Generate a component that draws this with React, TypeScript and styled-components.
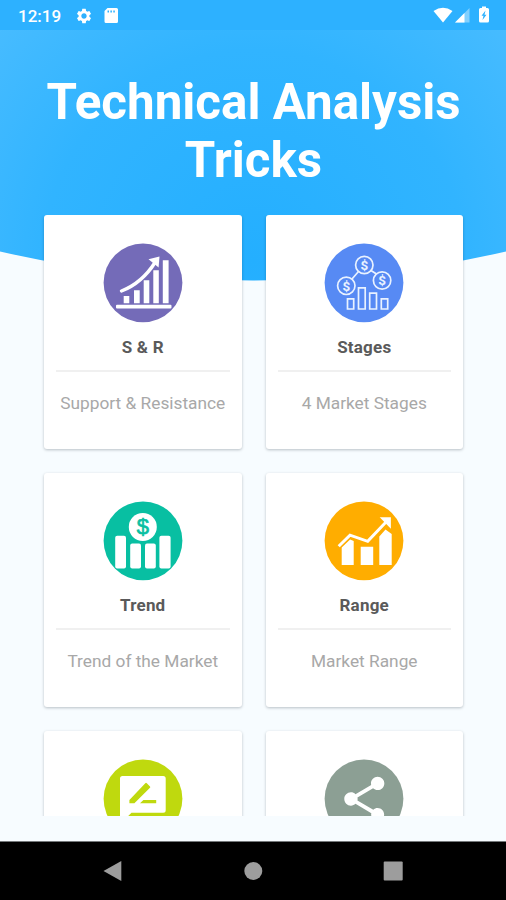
import React from "react";
import styled, { createGlobalStyle } from "styled-components";
import { MdShare, MdSettings } from "react-icons/md";

const GlobalStyle = createGlobalStyle`
  * { box-sizing: border-box; }
  body { margin: 0; font-family: Roboto, sans-serif; }
`;

const Screen = styled.div`
  position: relative;
  display: flex;
  flex-direction: column;
  width: 506px;
  height: 900px;
  overflow: hidden;
  background: #f7fcff;
`;

const Backdrop = styled.svg`
  position: absolute;
  top: 0;
  left: 0;
`;

const StatusBar = styled.header`
  position: relative;
  display: flex;
  align-items: center;
  height: 30px;
  padding: 2px 15px 0 18px;
  background: #2db1ff;
  color: #fff;
`;

const Clock = styled.span`
  width: 57px;
  font-size: 17px;
  font-weight: 500;
`;

const StatusIcons = styled.div<{ $push?: boolean }>`
  display: flex;
  align-items: center;
  margin-left: ${(p) => (p.$push ? "auto" : "0")};
`;

const Title = styled.h1`
  position: relative;
  height: 185px;
  margin: 0;
  padding: 43px 0 0 1px;
  color: #fff;
  font-size: 49.3px;
  font-weight: 700;
  line-height: 58px;
  text-align: center;
`;

const CardGrid = styled.main`
  position: relative;
  display: grid;
  grid-template-columns: 197.5px 197.5px;
  grid-auto-rows: 234px;
  gap: 24px;
  height: 601px;
  padding: 0 43px 0 44px;
  overflow: hidden;
`;

const Card = styled.section`
  display: flex;
  flex-direction: column;
  align-items: center;
  padding: 28px 12px 0;
  border-radius: 3px;
  background: #fff;
  box-shadow: 0 1px 3px rgba(0, 20, 30, 0.26);
`;

const IconCanvas = styled.svg`
  display: block;
  flex: none;
  width: 80px;
  height: 80px;
`;

const CardTitle = styled.h2`
  width: 100%;
  height: 49px;
  margin: 0;
  padding-top: 14px;
  border-bottom: 2px solid #f0f0f0;
  color: #5a5a5a;
  font-size: 17px;
  font-weight: 700;
  line-height: 20px;
  letter-spacing: 0.2px;
  text-align: center;
`;

const CardText = styled.p`
  margin: 20px -10px 0;
  color: #a8a8a8;
  font-size: 17.3px;
  line-height: 22px;
  white-space: nowrap;
`;

const NavBar = styled.nav`
  position: relative;
  display: grid;
  grid-template-columns: repeat(3, 140px);
  place-content: center;
  place-items: center;
  height: 59px;
  margin-top: auto;
  padding-bottom: 1px;
  border-top: 1px solid #75797b;
  background: #000;
`;

function GrowthIcon() {
  return (
    <g fill="#fff">
      <path d="M20.7 53H26.3V60.3H20.7ZM31 47.3H36.7V60.3H31ZM40.7 37.3H46.3V60.3H40.7ZM50.3 27.3H55.8V60.3H50.3ZM59.8 17.3H65.6V60.3H59.8Z" />
      <rect x="13" y="61.8" width="55.5" height="3.7" rx="1" />
      <path d="M18.5 48Q39 40 52 19.5" fill="none" stroke="#fff" strokeWidth="3.4" strokeLinecap="round" />
      <path d="M45.5 16.2L56.5 13.5L55.6 24.5Z" />
    </g>
  );
}

const coins = [[39.8, 22], [21.8, 42.8], [57.6, 37.5]];

function StagesIcon() {
  return (
    <g transform="translate(0.5 0)" fill="none" stroke="#e9f2ff" strokeWidth="1.7">
      <path d="M34 28.5L27.5 36M46.5 27.5L52 31" />
      {coins.map(([x, y]) => (
        <g key={x}>
          <circle cx={x} cy={y} r="8.7" />
          <text x={x} y={y + 4.7} fill="#e9f2ff" stroke="none" fontSize="13.5" fontWeight="700" textAnchor="middle">$</text>
        </g>
      ))}
      <path d="M23 55.8H29.2V66H23ZM34 44.8H40.7V66H34ZM45.2 50.2H52V66H45.2ZM56.8 55.8H63.2V66H56.8Z" />
    </g>
  );
}

function TrendIcon() {
  return (
    <g fill="#fff">
      <rect x="12.2" y="34.7" width="10.8" height="32.8" rx="2" />
      <rect x="27.2" y="42.5" width="10.8" height="25" rx="2" />
      <rect x="42" y="42.5" width="10.8" height="25" rx="2" />
      <rect x="56.4" y="34.7" width="11.2" height="32.8" rx="2" />
      <circle cx="39.8" cy="26" r="14" />
      <text x="39.8" y="33.4" fill="#08bfa2" stroke="#08bfa2" strokeWidth="0.7" fontFamily="Liberation Sans, sans-serif" fontSize="22" textAnchor="middle">$</text>
    </g>
  );
}

function RangeIcon() {
  return (
    <g transform="translate(0.5 0)" fill="#fff">
      <path d="M17.2 46.5L25.6 38.5L29.2 40V64H17.2ZM36.2 45.7H48.7V64H36.2ZM54.8 35.5L61 28.5L67.2 33V64H54.8Z" />
      <path d="M14.2 45.2L25.5 34.2L43.2 40.3L62 20.5" fill="none" stroke="#fff" strokeWidth="3" />
      <path d="M55.2 16.3H66.4V27.8Z" />
    </g>
  );
}

function ReviewIcon() {
  return (
    <g>
      <path d="M19.5 17H60.2Q62.7 17 62.7 19.5V51.2Q62.7 53.7 60.2 53.7H28.5L17 65.2V19.5Q17 17 19.5 17Z" fill="#fff" />
      <path d="M26.4 44.3V41L42.3 24.2Q43 23.5 43.8 24.2L47 27.4Q47.6 28.1 47 28.8L31.4 44.3ZM37 44.3L40.4 41H53.2V44.3Z" fill="#bfd90e" />
    </g>
  );
}

const cards = [
  { title: "S & R", text: "Support & Resistance", color: "#746bb8", icon: <GrowthIcon /> },
  { title: "Stages", text: "4 Market Stages", color: "#578af4", icon: <StagesIcon /> },
  { title: "Trend", text: "Trend of the Market", color: "#08bfa2", icon: <TrendIcon /> },
  { title: "Range", text: "Market Range", color: "#ffad00", icon: <RangeIcon /> },
  { title: "", text: "", color: "#bfd90e", icon: <ReviewIcon /> },
  { title: "", text: "", color: "#8c9f94", icon: <MdShare x={13.6} y={13.3} size={53.4} color="#fff" /> },
];

export default function App() {
  return (
    <>
      <GlobalStyle />
      <Screen>
        <Backdrop width="506" height="290" viewBox="0 0 506 290">
          <defs>
            <radialGradient id="sky" gradientUnits="userSpaceOnUse" cx="253" cy="260" r="350">
              <stop offset="0" stopColor="#24afff" />
              <stop offset="0.6" stopColor="#31b4ff" />
              <stop offset="1" stopColor="#48bcff" />
            </radialGradient>
          </defs>
          <path d="M0 0H506V251.5Q253 309.5 0 251.5Z" fill="url(#sky)" />
        </Backdrop>
        <StatusBar>
          <Clock>12:19</Clock>
          <StatusIcons>
            <MdSettings size={18} />
            <svg width="30" height="18" viewBox="0 0 30 18" fill="#fff">
              <path fillRule="evenodd" d="M14.5 1H23.5Q25 1 25 2.5V14.5Q25 16 23.5 16H13Q11.5 16 11.5 14.5V4ZM14.5 3.5V5.5H16V3.5ZM17.4 3.5V5.5H18.9V3.5ZM20.3 3.5V5.5H21.8V3.5Z" />
            </svg>
          </StatusIcons>
          <StatusIcons $push>
            <svg width="58" height="20" viewBox="0 0 58 20" fill="#fff">
              <path d="M0.5 5Q10 -1.5 19.5 5L10 16.5Z" />
              <path d="M36.5 2V16.5H22Z" opacity="0.4" />
              <path d="M31.5 7V16.5H22Z" />
              <path fillRule="evenodd" d="M48 2H49V0.5H53V2H54.5Q56 2 56 3.5V15Q56 16.5 54.5 16.5H47.5Q46 16.5 46 15V3.5Q46 2 47.5 2ZM52.5 4.5L48.5 9.8H50.5L49.5 14L53.5 8.8H51.5Z" />
            </svg>
          </StatusIcons>
        </StatusBar>
        <Title>Technical Analysis<br />Tricks</Title>
        <CardGrid>
          {cards.map((card) => (
            <Card key={card.color}>
              <IconCanvas viewBox="0 0 80 80">
                <circle cx="40" cy="39.8" r="39.4" fill={card.color} />
                {card.icon}
              </IconCanvas>
              {card.title && <CardTitle>{card.title}</CardTitle>}
              {card.text && <CardText>{card.text}</CardText>}
            </Card>
          ))}
        </CardGrid>
        <NavBar>
          <svg width="20" height="22" viewBox="0 0 20 22"><path d="M0.5 11L18.3 1V21Z" fill="#9d9d9d" /></svg>
          <svg width="20" height="20" viewBox="0 0 20 20"><circle cx="10.3" cy="10" r="9" fill="#9d9d9d" /></svg>
          <svg width="20" height="20" viewBox="0 0 20 20"><rect x="0.7" y="0.5" width="19" height="19" rx="1" fill="#9d9d9d" /></svg>
        </NavBar>
      </Screen>
    </>
  );
}
